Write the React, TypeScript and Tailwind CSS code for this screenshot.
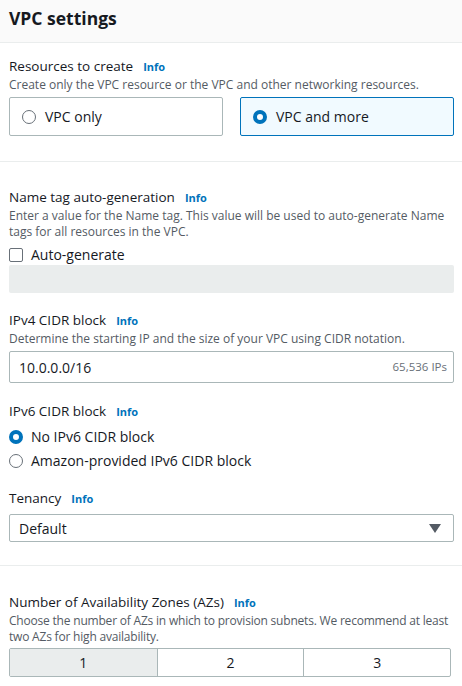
import React from 'react';

const font = { fontFamily: '"Open Sans", "Noto Sans", sans-serif' };

function Info() {
  return <span className="ml-[10px] text-[11px] font-bold text-[#0073bb]">Info</span>;
}

function Label({ text }: { text: string }) {
  return (
    <div className="flex items-baseline text-[13.5px] leading-[20px] text-[#16191f]">
      <span>{text}</span>
      <Info />
    </div>
  );
}

function Desc({ children }: { children: React.ReactNode }) {
  return <p className="text-[12px] leading-[16px] text-[#545b64]">{children}</p>;
}

function Radio({ checked }: { checked: boolean }) {
  return checked ? (
    <span className="inline-block w-[14px] h-[14px] rounded-full border-[4px] border-[#0073bb] bg-white shrink-0" />
  ) : (
    <span className="inline-block w-[14px] h-[14px] rounded-full border border-[#687078] bg-white shrink-0" />
  );
}

export default function App() {
  return (
    <div className="w-[462px] h-[686px] bg-white overflow-hidden" style={font}>
      {/* Header */}
      <div className="h-[43px] bg-[#fafafa] border-b border-[#eaeded] px-[9px] flex items-center">
        <h1 className="text-[17.5px] font-bold text-[#16191f] -mt-[6px]">VPC settings</h1>
      </div>

      {/* Resources to create */}
      <div className="px-[9px] pr-[8px] pt-[13px] pb-[25px] border-b border-[#eaeded]">
        <Label text="Resources to create" />
        <Desc>Create only the VPC resource or the VPC and other networking resources.</Desc>
        <div className="mt-[4px] grid grid-cols-2 gap-[17px]">
          <div className="h-[39px] border border-[#aab7b8] rounded-[2px] flex items-center px-[12px] gap-[9px]">
            <Radio checked={false} />
            <span className="text-[14px] text-[#16191f]">VPC only</span>
          </div>
          <div className="h-[39px] border border-[#0073bb] bg-[#f1faff] rounded-[2px] flex items-center px-[12px] gap-[9px]">
            <Radio checked />
            <span className="text-[14px] text-[#16191f]">VPC and more</span>
          </div>
        </div>
      </div>

      <div className="px-[9px] pr-[8px]">
        {/* Name tag */}
        <div className="pt-[25px]">
          <Label text="Name tag auto-generation" />
          <Desc>
            Enter a value for the Name tag. This value will be used to auto-generate Name tags for all resources in the VPC.
          </Desc>
          <label className="mt-[4px] flex items-center gap-[8px]">
            <span className="w-[14px] h-[14px] border border-[#687078] rounded-[2px] bg-white" />
            <span className="text-[14px] text-[#16191f]">Auto-generate</span>
          </label>
          <div className="h-[28px] bg-[#eaeded] rounded-[2px]" />
        </div>

        {/* IPv4 */}
        <div className="pt-[17px]">
          <Label text="IPv4 CIDR block" />
          <Desc>Determine the starting IP and the size of your VPC using CIDR notation.</Desc>
          <div className="mt-[4px] h-[32px] border border-[#aab7b8] rounded-[2px] flex items-center justify-between pl-[9px] pr-[6px]">
            <span className="text-[14px] text-[#16191f]">10.0.0.0/16</span>
            <span className="text-[11.5px] text-[#687078]">65,536 IPs</span>
          </div>
        </div>

        {/* IPv6 */}
        <div className="pt-[18px]">
          <Label text="IPv6 CIDR block" />
          <div className="mt-[5px] flex flex-col gap-[5px]">
            <div className="flex items-center gap-[8px] h-[19px]">
              <Radio checked />
              <span className="text-[14px] text-[#16191f]">No IPv6 CIDR block</span>
            </div>
            <div className="flex items-center gap-[8px] h-[19px]">
              <Radio checked={false} />
              <span className="text-[14px] text-[#16191f]">Amazon-provided IPv6 CIDR block</span>
            </div>
          </div>
        </div>

        {/* Tenancy */}
        <div className="pt-[18px] pb-[23px]">
          <Label text="Tenancy" />
          <div className="mt-[5px] h-[28px] border border-[#aab7b8] rounded-[2px] flex items-center justify-between pl-[9px] pr-[12px]">
            <span className="text-[14px] text-[#16191f]">Default</span>
            <svg width="12" height="9" viewBox="0 0 12 9">
              <path d="M0 0 H12 L6 9 Z" fill="#545b64" />
            </svg>
          </div>
        </div>
      </div>

      {/* AZs */}
      <div className="border-t border-[#eaeded] px-[9px] pr-[4px] pt-[26px]">
        <Label text="Number of Availability Zones (AZs)" />
        <p className="text-[12px] leading-[16px] text-[#545b64] tracking-[-0.2px]">
          Choose the number of AZs in which to provision subnets. We recommend at least
          <br />
          two AZs for high availability.
        </p>
        <div className="mt-[3px] w-[442px] h-[29px] grid grid-cols-3 border border-[#aab7b8] rounded-[2px] overflow-hidden text-[14px] text-[#16191f]">
          <div className="bg-[#eaeded] flex items-center justify-center">1</div>
          <div className="border-l border-[#aab7b8] flex items-center justify-center">2</div>
          <div className="border-l border-[#aab7b8] flex items-center justify-center">3</div>
        </div>
      </div>
    </div>
  );
}
